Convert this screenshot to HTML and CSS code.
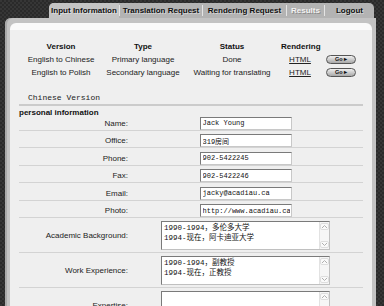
FILE: index.html
```html
<!DOCTYPE html>
<html lang="en">
<head>
    <meta charset="UTF-8">
    <title>Input Information</title>
    <link rel="stylesheet" href="styles.css">
</head>
<body>
    <div class="page">
        <ul class="tabs">
            <li class="tab active">Input Information</li>
            <li class="tab">Translation Request</li>
            <li class="tab">Rendering Request</li>
            <li class="tab disabled">Results</li>
            <li class="tab">Logout</li>
        </ul>
        <div class="panel">
            <div class="inner">
                <div class="versions">
                    <div class="th">Version</div>
                    <div class="th">Type</div>
                    <div class="th">Status</div>
                    <div class="th">Rendering</div>
                    <div></div>

                    <div>English to Chinese</div>
                    <div>Primary language</div>
                    <div>Done</div>
                    <div><a href="#">HTML</a></div>
                    <div><button class="go">Go &#9656;</button></div>

                    <div>English to Polish</div>
                    <div>Secondary language</div>
                    <div>Waiting for translating</div>
                    <div><a href="#">HTML</a></div>
                    <div><button class="go">Go &#9656;</button></div>
                </div>

                <h2 class="section-title">Chinese Version</h2>
                <h3 class="group-title">personal information</h3>

                <div class="field-row">
                    <label for="name">Name:</label>
                    <div class="field"><input type="text" id="name" value="Jack Young"></div>
                </div>
                <div class="field-row">
                    <label for="office">Office:</label>
                    <div class="field"><input type="text" id="office" value="319房间"></div>
                </div>
                <div class="field-row">
                    <label for="phone">Phone:</label>
                    <div class="field"><input type="text" id="phone" value="902-5422245"></div>
                </div>
                <div class="field-row">
                    <label for="fax">Fax:</label>
                    <div class="field"><input type="text" id="fax" value="902-5422246"></div>
                </div>
                <div class="field-row">
                    <label for="email">Email:</label>
                    <div class="field"><input type="text" id="email" value="jacky@acadiau.ca"></div>
                </div>
                <div class="field-row">
                    <label for="photo">Photo:</label>
                    <div class="field"><input type="text" id="photo" value="http://www.acadiau.ca"></div>
                </div>
                <div class="field-row tall">
                    <label for="academic">Academic Background:</label>
                    <div class="field">
                        <div class="text-box">
                            <textarea id="academic">1990-1994，多伦多大学
1994-现在，阿卡迪亚大学</textarea>
                            <div class="scroll">
                                <svg width="7" height="5" viewBox="0 0 7 5"><path d="M1 4 L3.5 1.5 L6 4" fill="none" stroke="#b0b0b0" stroke-width="1"/></svg>
                                <svg width="7" height="5" viewBox="0 0 7 5"><path d="M1 1 L3.5 3.5 L6 1" fill="none" stroke="#b0b0b0" stroke-width="1"/></svg>
                            </div>
                        </div>
                    </div>
                </div>
                <div class="field-row tall">
                    <label for="work">Work Experience:</label>
                    <div class="field">
                        <div class="text-box">
                            <textarea id="work">1990-1994，副教授
1994-现在，正教授</textarea>
                            <div class="scroll">
                                <svg width="7" height="5" viewBox="0 0 7 5"><path d="M1 4 L3.5 1.5 L6 4" fill="none" stroke="#b0b0b0" stroke-width="1"/></svg>
                                <svg width="7" height="5" viewBox="0 0 7 5"><path d="M1 1 L3.5 3.5 L6 1" fill="none" stroke="#b0b0b0" stroke-width="1"/></svg>
                            </div>
                        </div>
                    </div>
                </div>
                <div class="field-row tall">
                    <label for="expertise">Expertise:</label>
                    <div class="field">
                        <div class="text-box">
                            <textarea id="expertise"></textarea>
                            <div class="scroll">
                                <svg width="7" height="5" viewBox="0 0 7 5"><path d="M1 4 L3.5 1.5 L6 4" fill="none" stroke="#b0b0b0" stroke-width="1"/></svg>
                                <svg width="7" height="5" viewBox="0 0 7 5"><path d="M1 1 L3.5 3.5 L6 1" fill="none" stroke="#b0b0b0" stroke-width="1"/></svg>
                            </div>
                        </div>
                    </div>
                </div>
            </div>
        </div>
    </div>
</body>
</html>
```

FILE: styles.css
```css
html, body {
    overflow: hidden;
}
body {
    margin: 0;
    font-family: "Liberation Sans", Arial, sans-serif;
    font-size: 8px;
    color: #1a1a1a;
    background: repeating-conic-gradient(#2a2a2a 0 25%, #363636 0 50%) 0 0 / 4px 4px;
}
.page {
    padding: 3px 8px 0 5px;
}
.tabs {
    list-style: none;
    display: flex;
    margin: 0 2px 0 44px;
    padding: 0;
    height: 15px;
    background-color: #b3b3b3;
    border-radius: 5px 5px 0 0;
    overflow: hidden;
}
.tab {
    font-weight: bold;
    text-align: center;
    color: #111;
    text-shadow: 1px 1px 0 rgba(255, 255, 255, 0.45);
    border-left: 1px solid #e4e4e4;
    margin: 2px 0;
    line-height: 11px;
}
.tab:first-child {
    border-left: none;
}
.tab:nth-child(1) { width: 70px; }
.tab:nth-child(2) { width: 82px; }
.tab:nth-child(3) { width: 83px; }
.tab:nth-child(4) { width: 37px; }
.tab:nth-child(5) { flex: 1; }
.tab.active {
    background-color: #c4c4c4;
    margin: 0;
    padding-top: 2px;
}
.tab.disabled {
    color: #f2f2f2;
    text-shadow: 1px 1px 0 #8a8a8a;
}
.panel {
    background-color: #c3c3c3;
    border-radius: 6px 0 0 0;
    padding: 5px 4px 0 5px;
    box-shadow: inset 2px 0 0 #a9a9a9;
}
.inner {
    background: linear-gradient(#fafafa 0 7px, #efefef 7px);
    border-radius: 6px 6px 0 0;
    padding: 17px 9px 0 9px;
    height: 290px;
}
.versions {
    display: grid;
    grid-template-columns: 84px 80px 98px 38px 44px;
    line-height: 13px;
    text-align: center;
    color: #222;
}
.versions .th {
    font-weight: bold;
    color: #111;
}
.versions a {
    color: #222;
}
.go {
    font-family: "Liberation Sans", Arial, sans-serif;
    font-size: 5.5px;
    font-weight: bold;
    width: 30px;
    height: 9px;
    padding: 0;
    line-height: 7px;
    border: 1px solid #555;
    border-radius: 5px;
    background: linear-gradient(#f0f0f0, #a8a8a8);
    color: #111;
    vertical-align: middle;
}
.section-title {
    font-family: "Liberation Mono", monospace;
    font-size: 8px;
    font-weight: normal;
    line-height: 10px;
    margin: 14px 0 0 0;
    padding: 0 0 1px 9px;
    color: #222;
    border-bottom: 2px solid #cbcbcb;
}
.group-title {
    font-size: 8px;
    font-weight: bold;
    line-height: 9px;
    margin: 2px 0 -4px 0;
    color: #111;
}
.field-row {
    display: grid;
    grid-template-columns: 109px 1fr;
    align-items: center;
    padding-top: 3.5px;
    border-bottom: 1px solid #d3d3d3;
}
.field-row label {
    text-align: right;
    line-height: 13px;
    color: #222;
}
.field {
    display: flex;
    justify-content: center;
}
.field input {
    box-sizing: border-box;
    width: 92px;
    height: 13px;
    padding: 0 1px 0 2px;
    margin: 0;
    border: 1px solid #7a7a7a;
    border-right-color: #c8c8c8;
    border-bottom-color: #c8c8c8;
    background: #fff;
    font-family: "Liberation Mono", "Noto Sans CJK SC", monospace;
    font-size: 7px;
    color: #111;
    outline: none;
}
.field-row.tall {
    padding: 3px 0 2px 0;
}
.text-box {
    box-sizing: border-box;
    display: flex;
    width: 169px;
    height: 29px;
    border: 1px solid #7a7a7a;
    border-right-color: #c0c0c0;
    border-bottom-color: #c0c0c0;
    background: #fff;
}
.text-box textarea {
    flex: 1;
    border: none;
    margin: 0;
    padding: 1px 2px;
    resize: none;
    overflow: hidden;
    outline: none;
    font-family: "Liberation Mono", "Noto Sans CJK SC", monospace;
    font-size: 7.5px;
    line-height: 10px;
    color: #111;
}
.scroll {
    width: 9px;
    display: flex;
    flex-direction: column;
    justify-content: space-between;
    align-items: center;
    background: #f6f6f6;
    border-left: 1px solid #e2e2e2;
    padding: 1px 0;
}
.scroll svg {
    display: block;
    border: 1px solid #dedede;
    border-radius: 2px;
    background: #fafafa;
}
```
